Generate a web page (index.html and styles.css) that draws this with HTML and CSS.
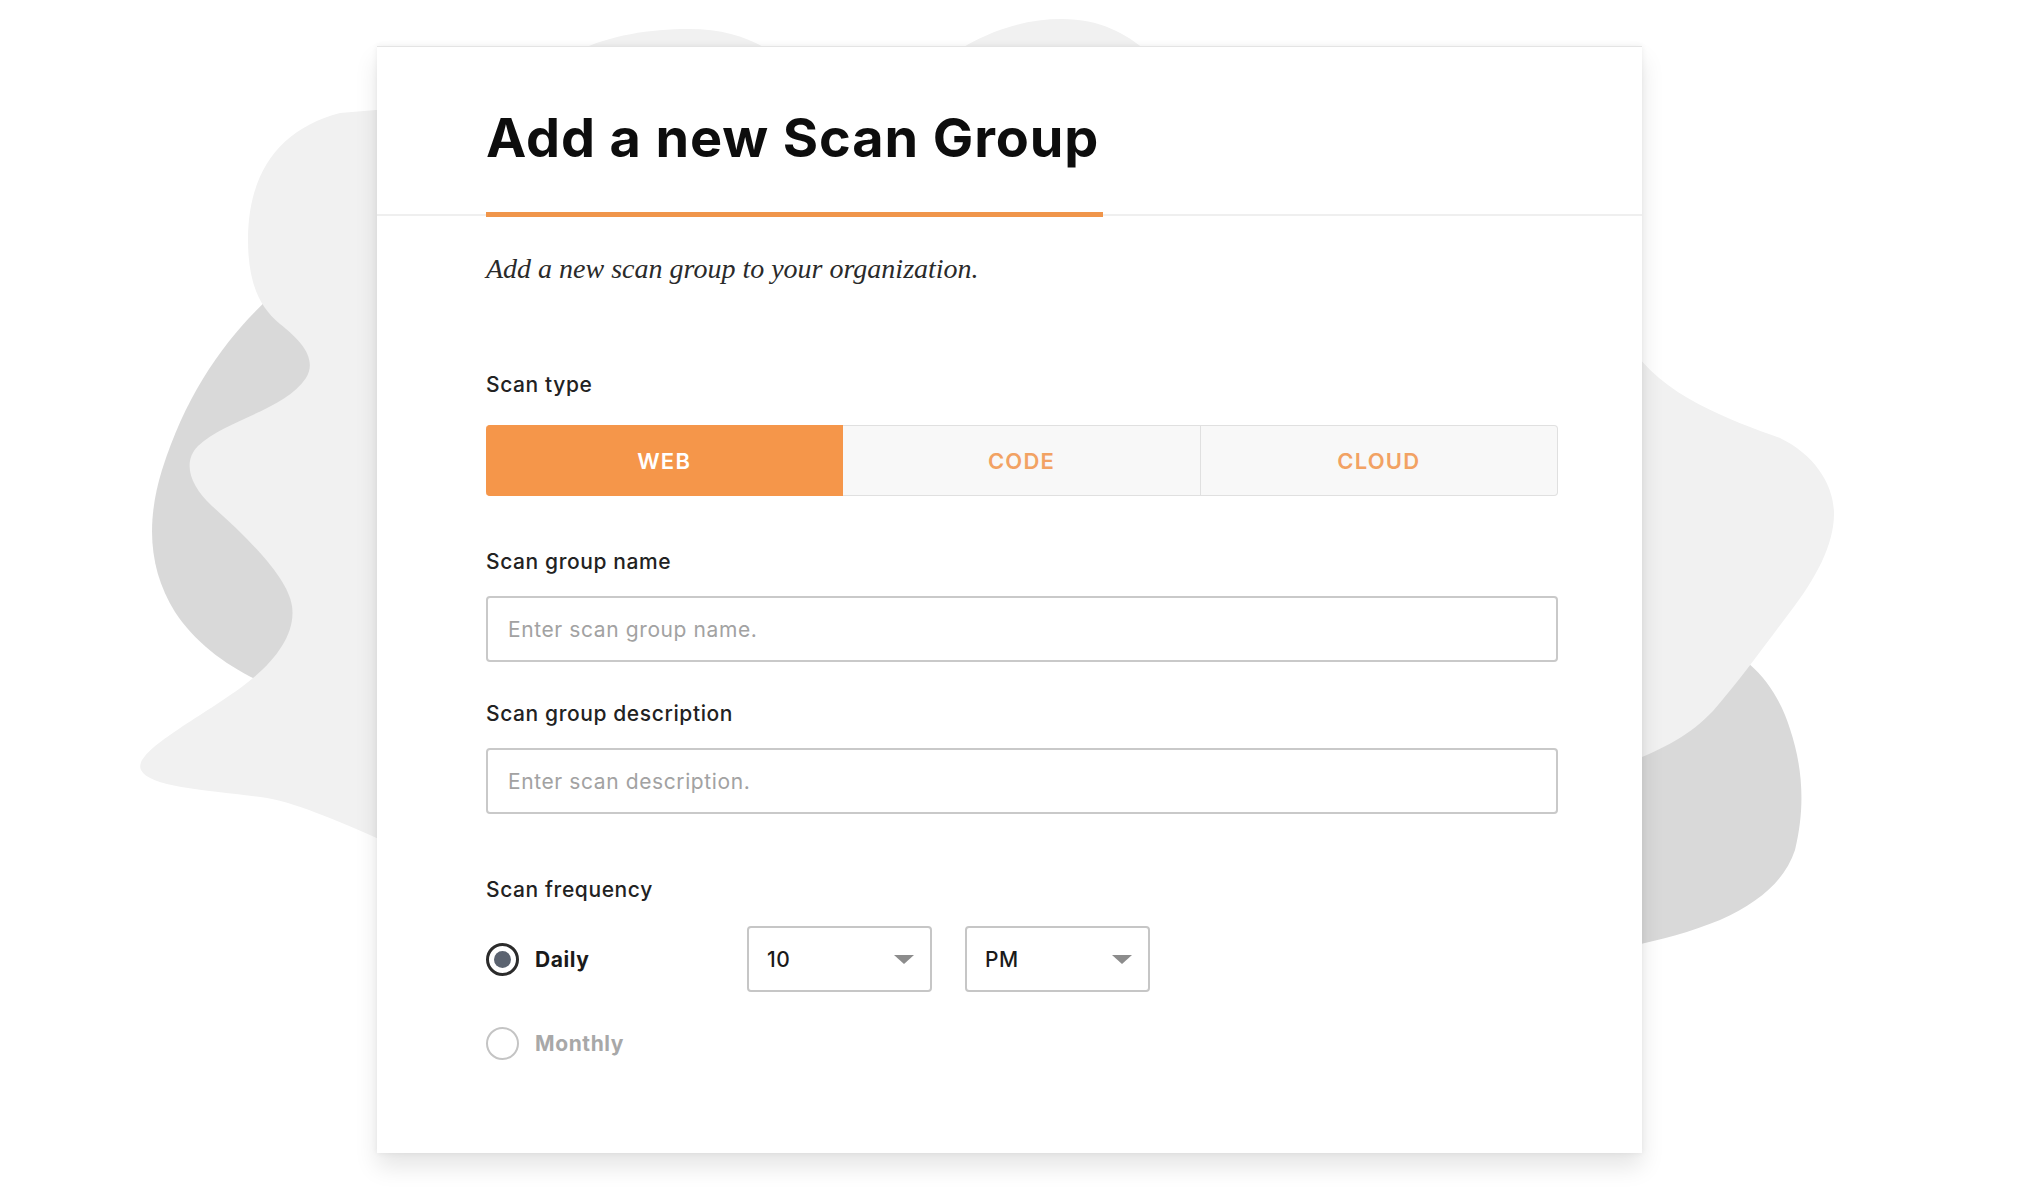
FILE: index.html
```html
<!DOCTYPE html>
<html>
  <head>
    <title>Add a new Scan Group</title>
    <link rel="stylesheet" href="styles.css">
  </head>
  <body>
    <div class="stage">
      <!-- decorative blobs behind the card -->
      <svg class="blobs" width="2018" height="1200" viewBox="0 0 2018 1200">
        <path fill="#d9d9d9" d="M 290 280 C 240 320, 190 380, 162 470 C 145 525, 150 572, 175 612 C 200 650, 240 675, 285 692 L 420 700 L 420 280 Z"/>
        <path fill="#d9d9d9" d="M 1700 640 C 1750 650, 1778 690, 1790 729 C 1802 765, 1806 805, 1795 850 C 1785 880, 1760 902, 1720 920 C 1690 932, 1662 940, 1630 946 L 1600 946 L 1600 640 Z"/>
        <path fill="#f1f1f1" d="M 400 108
          L 560 80
          L 575 52 C 610 35, 650 29, 689 29 C 725 29, 750 38, 772 52
          L 955 52 C 990 30, 1025 19, 1062 19 C 1100 19, 1125 33, 1148 52
          L 1630 345
          C 1660 395, 1730 420, 1780 438
          C 1815 455, 1834 485, 1834 514
          C 1834 545, 1815 580, 1790 612
          C 1765 645, 1740 680, 1713 711
          C 1690 735, 1665 748, 1630 762
          L 400 848
          C 340 822, 300 804, 267 798
          C 210 790, 150 788, 141 770
          C 132 752, 200 718, 243 686
          C 275 662, 296 634, 292 606
          C 288 578, 250 540, 212 506
          C 190 486, 182 462, 198 446
          C 225 420, 285 410, 306 378
          C 318 358, 300 340, 280 324
          C 258 306, 248 280, 248 240
          C 248 170, 282 128, 340 113
          Z"/>
      </svg>

      <div class="card">
        <div class="card-head">
          <h1 class="title">Add a new Scan Group</h1>
          <div class="title-bar"></div>
        </div>

        <div class="card-body">
          <p class="intro">Add a new scan group to your organization.</p>

          <label class="field-label first">Scan type</label>
          <div class="segmented">
            <button class="seg active">WEB</button>
            <button class="seg">CODE</button>
            <button class="seg">CLOUD</button>
          </div>

          <label class="field-label">Scan group name</label>
          <input class="text-input" type="text" placeholder="Enter scan group name.">

          <label class="field-label">Scan group description</label>
          <input class="text-input" type="text" placeholder="Enter scan description.">

          <label class="field-label freq">Scan frequency</label>
          <div class="freq-row">
            <div class="radio-opt">
              <span class="radio checked"></span>
              <span class="radio-text">Daily</span>
            </div>
            <div class="select">
              <span>10</span>
              <span class="caret"></span>
            </div>
            <div class="select">
              <span>PM</span>
              <span class="caret"></span>
            </div>
          </div>
          <div class="radio-opt monthly">
            <span class="radio"></span>
            <span class="radio-text">Monthly</span>
          </div>
        </div>
      </div>
    </div>
  </body>
</html>
```

FILE: styles.css
```css
body
{
  margin: 0;
  background: #fff;
  font-family: "Inter", "Liberation Sans", sans-serif;
  color: #222;
}
.stage
{
  position: relative;
  width: 2018px;
  height: 1200px;
  overflow: hidden;
  padding-top: 46px;
  box-sizing: border-box;
}
.blobs
{
  position: absolute;
  left: 0;
  top: 0;
}
.card
{
  position: relative;
  margin-left: 377px;
  width: 1265px;
  height: 1107px;
  box-sizing: border-box;
  background: #fff;
  border-top: 1px solid #e4e4e4;
  box-shadow: 0 14px 22px rgba(0, 0, 0, 0.10), 0 0 6px rgba(0, 0, 0, 0.07);
}
.card-head
{
  padding: 64px 84px 0 109px;
  border-bottom: 2px solid #efefef;
}
.title
{
  margin: 0;
  font-size: 54px;
  line-height: 54px;
  font-weight: 700;
  color: #0d0d0d;
  letter-spacing: 0.9px;
}
.title-bar
{
  position: relative;
  width: 617px;
  height: 5px;
  margin-top: 47px;
  margin-bottom: -3px;
  background: #f0954a;
}
.card-body
{
  padding: 36px 84px 0 109px;
}
.intro
{
  margin: 0;
  font-family: "Liberation Serif", serif;
  font-style: italic;
  font-size: 28px;
  line-height: 34px;
  color: #2a2a2a;
}
.field-label
{
  display: block;
  margin: 40px 0 22px;
  font-size: 21px;
  line-height: 24px;
  font-weight: 500;
  letter-spacing: 0.6px;
  color: #222;
}
.field-label.first
{
  margin-top: 87px;
  margin-bottom: 28px;
}
.field-label.freq
{
  margin-top: 64px;
  margin-bottom: 24px;
}
.segmented
{
  display: flex;
  height: 71px;
  margin-bottom: 54px;
}
.seg
{
  flex: 1;
  border: 1px solid #e0e0e0;
  border-left: none;
  background: #f8f8f8;
  color: #f2a263;
  font-family: inherit;
  font-size: 22px;
  font-weight: 600;
  letter-spacing: 1.2px;
}
.seg:first-child
{
  border-radius: 4px 0 0 4px;
}
.seg:last-child
{
  border-radius: 0 4px 4px 0;
}
.seg.active
{
  background: #f5964a;
  border-color: #f5964a;
  color: #fff;
}
.text-input
{
  display: block;
  width: 100%;
  height: 66px;
  box-sizing: border-box;
  padding: 0 20px;
  border: 2px solid #c9c9c9;
  border-radius: 4px;
  font-family: inherit;
  font-size: 21px;
  letter-spacing: 0.6px;
  color: #222;
}
.text-input::placeholder
{
  color: #a2a2a2;
}
.freq-row
{
  display: flex;
  align-items: center;
  height: 66px;
}
.radio-opt
{
  display: flex;
  align-items: center;
  width: 261px;
  gap: 16px;
}
.radio
{
  width: 33px;
  height: 33px;
  box-sizing: border-box;
  border: 2px solid #c4c4c4;
  border-radius: 50%;
  display: flex;
  align-items: center;
  justify-content: center;
}
.radio.checked
{
  border: 3px solid #2b2b2b;
}
.radio.checked::after
{
  content: "";
  width: 17px;
  height: 17px;
  border-radius: 50%;
  background: #5b6370;
}
.radio-text
{
  font-size: 21px;
  font-weight: 700;
  letter-spacing: 0.6px;
  color: #1a1a1a;
}
.monthly
{
  margin-top: 35px;
}
.monthly .radio-text
{
  color: #a8a8a8;
}
.select
{
  display: flex;
  align-items: center;
  justify-content: space-between;
  width: 185px;
  height: 66px;
  box-sizing: border-box;
  padding: 0 16px 0 18px;
  margin-right: 33px;
  border: 2px solid #c6c6c6;
  border-radius: 4px;
  font-size: 21px;
  font-weight: 500;
  letter-spacing: 0.6px;
  color: #1a1a1a;
}
.caret
{
  width: 0;
  height: 0;
  border-left: 10px solid transparent;
  border-right: 10px solid transparent;
  border-top: 9px solid #8c8c8c;
}
```
